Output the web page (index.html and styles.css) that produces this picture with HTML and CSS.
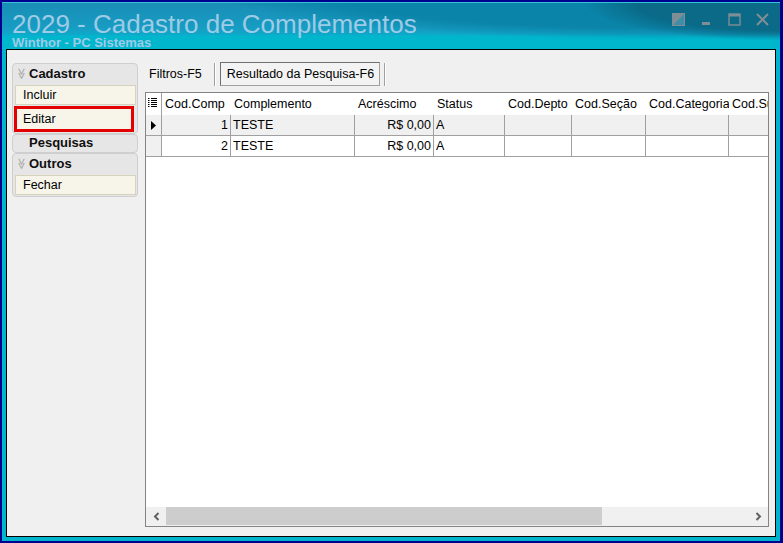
FILE: index.html
```html
<!DOCTYPE html>
<html lang="pt-BR">
<head>
	<meta charset="UTF-8">
	<title>Cadastro de Complementos</title>
	<link rel="stylesheet" href="styles.css">
</head>
<body>
	<div class="janela">
		<div class="titulo">
			<div class="titulo-textos">
				<div class="titulo-principal">2029 - Cadastro de Complementos</div>
				<div class="titulo-sub">Winthor - PC Sistemas</div>
			</div>
			<div class="botoes-janela">
				<svg width="13" height="13" viewBox="0 0 13 13"><rect x="0.5" y="0.5" width="12" height="12" fill="#3f8ea6" stroke="#7f8e94"/><path d="M1 1 H12 L1 12 Z" fill="#7f8e94"/></svg>
				<svg width="13" height="13" viewBox="0 0 13 13"><rect x="2" y="9" width="8" height="3" fill="#7f8e94"/></svg>
				<svg width="13" height="13" viewBox="0 0 13 13"><rect x="1" y="1" width="11" height="11" fill="none" stroke="#7f8e94" stroke-width="1.4"/><rect x="1" y="1" width="11" height="2.5" fill="#7f8e94"/></svg>
				<svg width="13" height="13" viewBox="0 0 13 13"><path d="M1 1 L12 12 M12 1 L1 12" stroke="#7f8e94" stroke-width="2"/></svg>
			</div>
		</div>
		<div class="conteudo">
			<div class="menu-lateral">
				<div class="grupo">
					<div class="grupo-cabecalho"><span class="seta">&#8811;</span>Cadastro</div>
					<div class="item">Incluir</div>
					<div class="item destaque">Editar</div>
				</div>
				<div class="grupo">
					<div class="grupo-cabecalho curto"><span class="seta"></span>Pesquisas</div>
				</div>
				<div class="grupo">
					<div class="grupo-cabecalho"><span class="seta">&#8811;</span>Outros</div>
					<div class="item">Fechar</div>
				</div>
			</div>
			<div class="area-principal">
				<div class="abas">
					<div class="aba">Filtros-F5</div>
					<div class="separador"></div>
					<div class="aba ativa">Resultado da Pesquisa-F6</div>
					<div class="separador"></div>
				</div>
				<div class="grade">
					<div class="grade-corpo">
						<div class="linha cabecalho">
							<div class="cel indicador"><svg width="9" height="9" viewBox="0 0 9 9"><path d="M0 0.5 H1.5 M3 0.5 H9 M0 2.5 H1.5 M3 2.5 H9 M0 4.5 H1.5 M3 4.5 H9 M0 6.5 H1.5 M3 6.5 H9 M0 8.5 H1.5 M3 8.5 H9" stroke="#000" stroke-width="1"/></svg></div>
							<div class="cel">Cod.Comp</div>
							<div class="cel">Complemento</div>
							<div class="cel">Acréscimo</div>
							<div class="cel">Status</div>
							<div class="cel">Cod.Depto</div>
							<div class="cel">Cod.Seção</div>
							<div class="cel">Cod.Categoria</div>
							<div class="cel">Cod.Su</div>
						</div>
						<div class="linha dados atual">
							<div class="cel indicador"><svg width="5" height="9" viewBox="0 0 5 9"><path d="M0 0 L5 4.5 L0 9 Z" fill="#000"/></svg></div>
							<div class="cel num">1</div>
							<div class="cel">TESTE</div>
							<div class="cel num">R$ 0,00</div>
							<div class="cel">A</div>
							<div class="cel"></div>
							<div class="cel"></div>
							<div class="cel"></div>
							<div class="cel"></div>
						</div>
						<div class="linha dados">
							<div class="cel indicador"></div>
							<div class="cel num">2</div>
							<div class="cel">TESTE</div>
							<div class="cel num">R$ 0,00</div>
							<div class="cel">A</div>
							<div class="cel"></div>
							<div class="cel"></div>
							<div class="cel"></div>
							<div class="cel"></div>
						</div>
					</div>
					<div class="rolagem">
						<div class="rolagem-botao"><svg width="7" height="9" viewBox="0 0 7 9"><path d="M5.5 1 L2 4.5 L5.5 8" fill="none" stroke="#606060" stroke-width="2"/></svg></div>
						<div class="rolagem-polegar"></div>
						<div class="rolagem-trilho"></div>
						<div class="rolagem-botao"><svg width="7" height="9" viewBox="0 0 7 9"><path d="M1.5 1 L5 4.5 L1.5 8" fill="none" stroke="#606060" stroke-width="2"/></svg></div>
					</div>
				</div>
			</div>
		</div>
	</div>
</body>
</html>
```

FILE: styles.css
```css
body {
	font-family: "Liberation Sans", Arial, sans-serif;
	font-size: 12px;
	background-color: #00008e;
	margin: 0;
	padding: 2px 3px 2px 2px;
	width: 783px;
	height: 543px;
	box-sizing: border-box;
}
.janela {
	height: 539px;
	background-color: #00b4cc;
	border-top: 1px solid #38c2da;
	box-sizing: border-box;
	display: flex;
	flex-direction: column;
}
.titulo {
	height: 46px;
	display: flex;
	justify-content: space-between;
	background:
		radial-gradient(ellipse 260px 50px at 100% 0%, #0a6a88 0 55%, transparent 75%),
		radial-gradient(ellipse 560px 60px at 85% -25%, #0a84a8 0 60%, transparent 80%),
		linear-gradient(180deg, #1a8db5 0%, #179dc3 55%, #0ea8c9 68%, #00b6cd 72%, #00b6cd 100%);
}
.titulo-textos {
	padding: 9px 0 0 10px;
	color: #9ecbe6;
}
.titulo-principal {
	font-size: 26px;
	line-height: 25px;
}
.titulo-sub {
	font-size: 13px;
	line-height: 12px;
	font-weight: bold;
}
.botoes-janela {
	display: flex;
	gap: 15px;
	padding: 10px 11px 0 0;
}
.botoes-janela svg {
	display: block;
}
.conteudo {
	flex: 1;
	margin: 0 4px 4px 4px;
	border: 1px solid #000;
	background-color: #f0f0f0;
	display: flex;
	gap: 7px;
	padding: 12px 6px 9px 5px;
}
.menu-lateral {
	width: 126px;
	margin-top: 1px;
}
.grupo {
	background-color: #e6e6e6;
	border: 1px solid #cfcfcf;
	border-radius: 4px;
}
.grupo-cabecalho {
	height: 19px;
	font-size: 13px;
	font-weight: bold;
	color: #101010;
	display: flex;
	align-items: center;
}
.grupo-cabecalho.curto {
	height: 17px;
	padding-bottom: 2px;
	box-sizing: border-box;
}
.seta {
	width: 16px;
	text-align: center;
	color: #a8a8a8;
	font-size: 11px;
	font-weight: normal;
	transform: rotate(90deg);
}
.item {
	height: 20px;
	line-height: 19px;
	margin: 2px 1px 1px 2px;
	padding-left: 7px;
	background-color: #f7f5ea;
	border: 1px solid #d6d3bd;
	box-sizing: border-box;
	font-size: 12.5px;
}
.item.destaque {
	height: 26px;
	line-height: 20px;
	margin: 0 3px 1px 1px;
	padding-left: 6px;
	border: 3px solid #e30000;
}
.area-principal {
	flex: 1;
	display: flex;
	flex-direction: column;
	gap: 6px;
	min-width: 0;
}
.abas {
	height: 24px;
	display: flex;
	align-items: center;
}
.aba {
	padding: 0 12px 0 4px;
	font-size: 12.5px;
}
.aba.ativa {
	height: 24px;
	line-height: 22px;
	padding: 0 5px 0 6px;
	margin: 0 4px 0 4px;
	border: 1px solid #a0a0a0;
	border-top-color: #707070;
	border-left-color: #707070;
	background-color: #f3f3f3;
	box-sizing: border-box;
}
.separador {
	width: 1px;
	height: 23px;
	background-color: #a0a0a0;
	border-right: 1px solid #fff;
}
.grade {
	flex: 1;
	border: 1px solid #848484;
	background-color: #fff;
	display: flex;
	flex-direction: column;
	overflow: hidden;
}
.grade-corpo {
	flex: 1;
	overflow: hidden;
}
.linha {
	display: grid;
	grid-template-columns: 16px 69px 124px 79px 71px 67px 74px 83px 40px;
}
.cel {
	box-sizing: border-box;
	white-space: nowrap;
	overflow: hidden;
	padding: 0 2px;
	font-size: 12.5px;
}
.cabecalho .cel {
	height: 22px;
	line-height: 23px;
	padding-left: 3px;
}
.cabecalho .indicador {
	border-right: 1px solid #a0a0a0;
	padding: 5px 0 0 2px;
}
.indicador svg {
	display: block;
}
.dados .cel {
	height: 21px;
	line-height: 21px;
	border-right: 1px solid #a0a0a0;
	border-bottom: 1px solid #a0a0a0;
}
.dados .indicador {
	background-color: #f0f0f0;
	padding: 6px 0 0 5px;
}
.dados.atual .cel {
	background-color: #f0f0f0;
}
.cel.num {
	text-align: right;
}
.rolagem {
	height: 19px;
	display: flex;
	background-color: #f0f0f0;
}
.rolagem-botao {
	width: 20px;
	display: flex;
	align-items: center;
	justify-content: center;
}
.rolagem-polegar {
	width: 436px;
	background-color: #cdcdcd;
	margin-bottom: 1px;
}
.rolagem-trilho {
	flex: 1;
}
```
